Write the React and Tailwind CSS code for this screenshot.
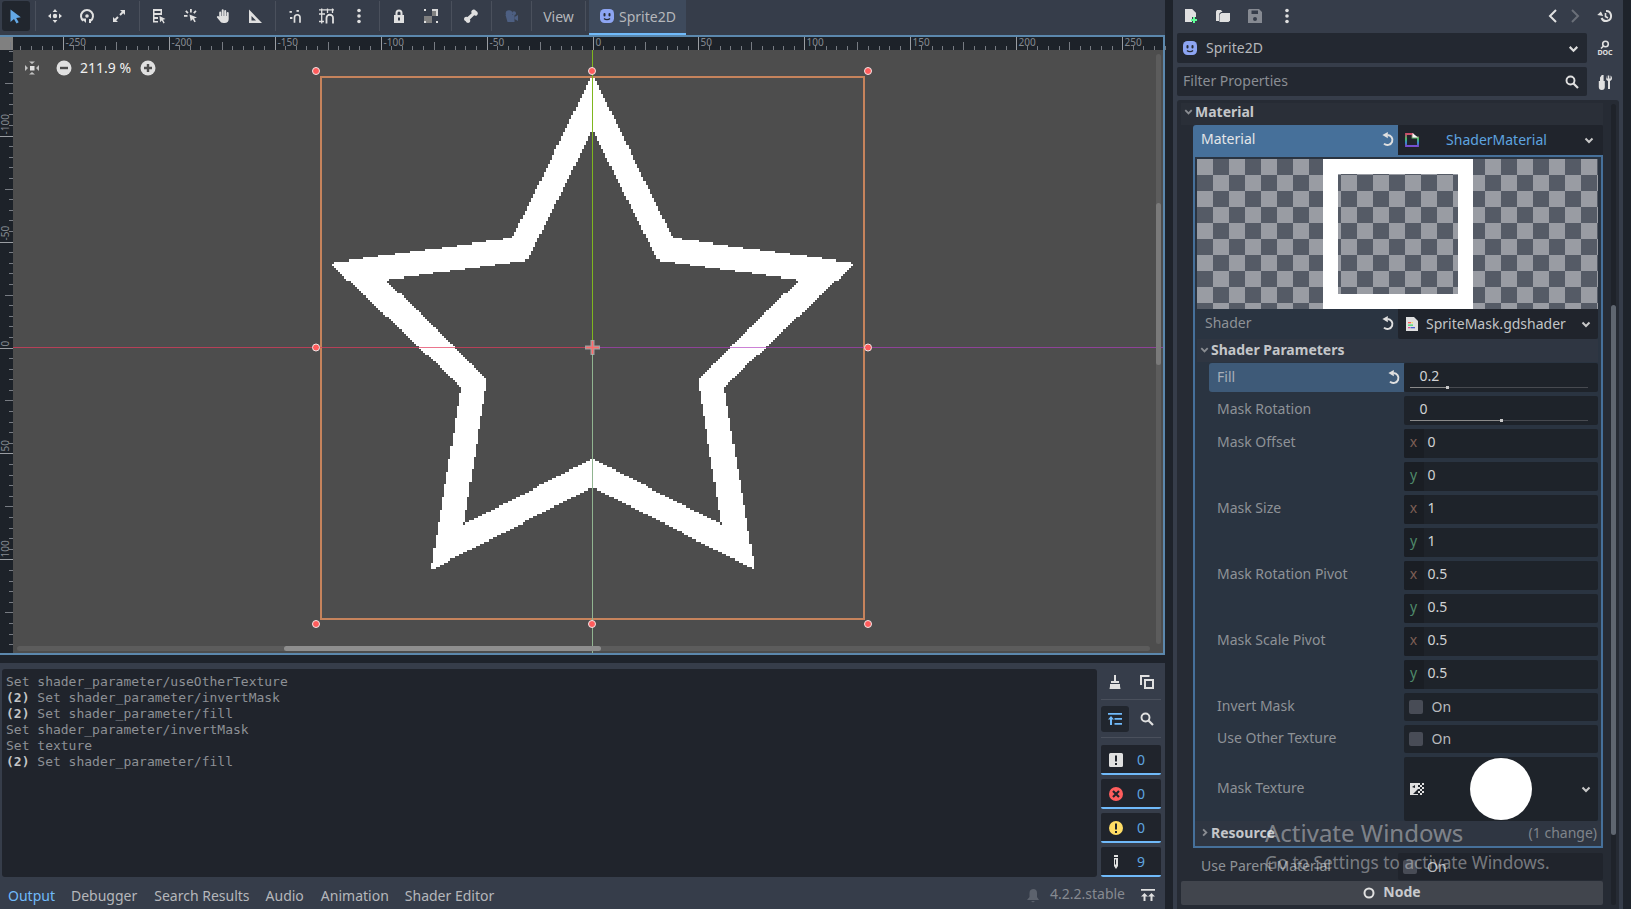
import React from "react";

const Ic = ({ s = 16, c = "#e0e0e0", children, className = "" }) => (
  <svg width={s} height={s} viewBox="0 0 16 16" fill={c} className={"shrink-0 " + className}>{children}</svg>
);
const Dots = () => <Ic><circle cx="8" cy="2.5" r="1.8" /><circle cx="8" cy="8" r="1.8" /><circle cx="8" cy="13.5" r="1.8" /></Ic>;
const Reset = ({ c = "#e0e0e0" }) => (
  <Ic c={c}><path d="M8.5 3A5 5 0 1 1 5 11.6" fill="none" stroke={c} strokeWidth="2" /><path d="M8.8 0v6.2L3.4 3.100z" /></Ic>
);
const Chev = ({ s = 12, c = "#c8c8c8", w = 2 }) => (
  <svg width={s} height={s} viewBox="0 0 12 12" className="shrink-0"><path d="M2.5 4.5 6 8l3.5-3.5" fill="none" stroke={c} strokeWidth={w} /></svg>
);
const SpriteIcon = () => (
  <Ic c="#8da5f3"><rect x="1" y="1" width="14" height="14" rx="4.5" /><rect x="4.5" y="5" width="2" height="3.4" rx="1" fill="#262b34" /><rect x="9.5" y="5" width="2" height="3.4" rx="1" fill="#262b34" /><path d="M5 10.5c1.5 1.6 4.5 1.6 6 0" fill="none" stroke="#262b34" strokeWidth="1.3" /></Ic>
);
const Search = () => <Ic><circle cx="6.5" cy="6.5" r="4" fill="none" stroke="#e0e0e0" strokeWidth="1.9" /><path d="M9.5 9.5 14 14" stroke="#e0e0e0" strokeWidth="2.2" /></Ic>;

const tools = [
  [<><circle cx="8" cy="8" r="2.2" /><path d="M8 1l2.4 3H5.6zM8 15l2.4-3H5.6zM1 8l3-2.4v4.8zM15 8l-3-2.4v4.8z" /></>],
  [<><path d="M4.4 12.8A6 6 0 1 1 11.6 12.8" fill="none" stroke="#e0e0e0" strokeWidth="2" /><path d="M2.5 10.5h4.5v4.5z" /><rect x="10" y="11" width="2" height="4" /><circle cx="8" cy="8" r="1.8" /></>],
  [<path d="M9 2h5v5l-1.8-1.8-2.5 2.5-1.4-1.4 2.5-2.5zM7 14H2V9l1.8 1.8 2.5-2.5 1.4 1.4-2.5 2.5z" />],
];
const tools2 = [
  [<><path d="M2 1h9v6H9.5V3h-6v2h6v2h-6v2H7v2H3.5v2H7v1.5H2z" /><path d="M8.5 8l6 3-2.5.8 1.7 3-1.2.7-1.7-3-1.8 1.7z" /></>],
  [<><rect x="7" y="1" width="1.8" height="3.5" /><rect x="1" y="7" width="3.5" height="1.8" /><rect x="3" y="2.5" width="1.8" height="3" transform="rotate(-45 3.9 4)" /><rect x="11" y="2.5" width="1.8" height="3" transform="rotate(45 11.9 4)" /><path d="M6.5 6.5l7.5 3-3 1 1.8 3-1.4.8-1.7-3-2 2z" /></>],
  [<path d="M4.2 9V4.5a1 1 0 0 1 2 0V8h.5V2.3a1 1 0 0 1 2 0V8h.5V3a1 1 0 0 1 2 0v5h.5V5a1 1 0 0 1 2 0v6c0 2.500-1.500 4-4 4H8.500c-2 0-3-.8-4-2.500L2 9.500c-.6-1.200.9-2.200 1.800-1.100z" />],
  [<path fillRule="evenodd" d="M2 1.500 15 15H2zM4.500 8v4.500H9z" />],
];
const tools3 = [
  [<><path d="M7.500 14.700V9.500a2.700 2.700 0 0 1 5.500 0V14.700" fill="none" stroke="#e0e0e0" strokeWidth="1.700" /><rect x="2.500" y="3" width="2.400" height="1.800" /><rect x="3" y="9" width="2.400" height="2" /><rect x="9.500" y="2" width="2.400" height="1.800" /></>],
  [<><path d="M2.700 0.500V15.500M8.500 0.500V5M13.500 0.500V5M0 1.800h15M0 6h6M0 13.500h5" fill="none" stroke="#e0e0e0" strokeWidth="1.300" /><path d="M7.500 15.500V10a3 3 0 0 1 6.500 0V15.500" fill="none" stroke="#e0e0e0" strokeWidth="1.800" /></>],
  [<><circle cx="8" cy="2.500" r="1.800" /><circle cx="8" cy="8" r="1.800" /><circle cx="8" cy="13.500" r="1.800" /></>],
];
const Lock = () => <Ic><path fillRule="evenodd" d="M4.500 7V5a3.500 3.500 0 0 1 7 0v2h1.500v8H3V7zM6.500 7h3V5a1.500 1.500 0 0 0-3 0zM7 9.500v3h2v-3z" /></Ic>;
const Group = () => <Ic c="#e0e0e0"><rect x="1" y="8" width="8" height="7" fill="#808080" /><rect x="9" y="1" width="6" height="7" fill="#d8d8d8" /><rect x="9" y="3" width="4" height="5" fill="#808080" /><rect x="1" y="1" width="2" height="2" /><rect x="13" y="13" width="2" height="2" /><rect x="1" y="13" width="2" height="2" /></Ic>;
const Bone = () => <Ic><path d="M11 1.500a2.200 2.200 0 0 1 2 1.600 2.300 2.300 0 0 1 1.200 3.800 2.300 2.300 0 0 1-3 .4L6.900 11.500a2.400 2.400 0 0 1-.5 3 2.300 2.300 0 0 1-3.600-1.300 2.300 2.300 0 0 1-1.300-3.600 2.400 2.400 0 0 1 3-.5L8.700 5.200a2.400 2.400 0 0 1 .4-3 2.300 2.300 0 0 1 1.900-.7z" /></Ic>;
const Cam = () => <Ic c="#4d5f82"><circle cx="6" cy="5.500" r="3.300" /><circle cx="11" cy="5.300" r="2" /><path d="M2.500 7h9v7h-7z" /><path d="M11.500 9l3.500-2v6l-3.500-2z" /></Ic>;

const Sep = () => <div className="w-px h-[30px] mt-px ml-[4px] mr-[3px] bg-[#4a505c]" />;
const Btn = ({ children, w = "w-[32px]" }) => <div className={"h-[32px] flex items-center justify-center " + w}>{children}</div>;

const ticks = [];
for (let n = -275; n <= 270; n += 5) ticks.push(n);
const ux = (n) => Math.round(592.5 + n * 2.119) + 0.5;
const uy = (n) => Math.round(347.5 + n * 2.119) + 0.5;
const tl = (n) => (n % 50 === 0 ? 13 : n % 25 === 0 ? 8 : 4);

const TopRuler = () => (
  <svg width="1150" height="13" viewBox="13 37 1150 13" className="block overflow-visible">
    {ticks.map((n) => <line key={n} x1={ux(n)} x2={ux(n)} y1={50 - tl(n)} y2={50} stroke={n % 50 === 0 ? "#9a9da2" : "#777b82"} />)}
    {ticks.filter((n) => n % 50 === 0).map((n) => (
      <text key={n} x={ux(n) + 2} y="46" fontSize="10" fill="#858a91" fontFamily="'Noto Sans',sans-serif">{n}</text>
    ))}
  </svg>
);
const LeftRuler = () => (
  <svg width="13" height="603" viewBox="0 50 13 603" className="block overflow-visible">
    {ticks.filter((n) => uy(n) > 50 && uy(n) < 653).map((n) => <line key={n} y1={uy(n)} y2={uy(n)} x1={13 - tl(n)} x2={13} stroke={n % 50 === 0 ? "#9a9da2" : "#777b82"} />)}
    {[-100, -50, 0, 50, 100].map((n) => (
      <text key={n} transform={`translate(8.500,${uy(n) - 2}) rotate(-90)`} fontSize="10" fill="#858a91" fontFamily="'Noto Sans',sans-serif">{n}</text>
    ))}
  </svg>
);

// The star texture: 256 texels drawn at 2.12 screen pixels each, sampled without smoothing.
const OUTER = [[592.5, 75], [673, 238], [855, 263], [724, 387], [755, 570], [592.5, 487], [431, 570], [461, 387], [330, 263], [512, 238]];
const INNER = [[592.5, 131], [528, 260], [386, 280], [487, 380], [464, 524], [592.5, 459], [721, 524], [698, 380], [799, 280], [657, 260]];
const inside = (poly, x, y) => {
  let r = false;
  for (let i = 0, j = poly.length - 1; i < poly.length; j = i++) {
    const [xi, yi] = poly[i];
    const [xj, yj] = poly[j];
    if (yi > y !== yj > y && x < ((xj - xi) * (y - yi)) / (yj - yi) + xi) r = !r;
  }
  return r;
};
const buildStar = () => {
  const T = 543 / 256;
  let d = "";
  for (let j = 0; j < 256; j++) {
    const cy = 77 + (j + 0.5) * T;
    const y0 = Math.round(77 + j * T);
    const y1 = Math.round(77 + (j + 1) * T);
    let start = -1;
    for (let i = 0; i <= 256; i++) {
      const cx = 321 + (i + 0.5) * T;
      const on = i < 256 && inside(OUTER, cx, cy) && !inside(INNER, cx, cy);
      if (on && start < 0) start = i;
      if (!on && start >= 0) {
        const x0 = Math.round(321 + start * T);
        const x1 = Math.round(321 + i * T);
        d += `M${x0} ${y0}H${x1}V${y1}H${x0}Z`;
        start = -1;
      }
    }
  }
  return d;
};
const STAR = buildStar();

const Canvas = () => {
  const handles = [[316, 71], [592, 71], [868, 71], [316, 347.500], [868, 347.500], [316, 624], [592, 624], [868, 624]];
  return (
    <svg width="1150" height="603" viewBox="13 50 1150 603" className="absolute inset-0 block">
      <path shapeRendering="crispEdges" fill="#fff" d={STAR} />
      <rect x="321" y="77" width="543" height="542" fill="none" stroke="#c6835c" strokeWidth="2" />
      <line x1="13" x2="592" y1="347.500" y2="347.500" stroke="#e23a5c" strokeOpacity="0.7" />
      <line x1="592" x2="1163" y1="347.500" y2="347.500" stroke="#b03ec0" strokeOpacity="0.65" />
      <line x1="592.500" x2="592.500" y1="50" y2="347" stroke="#7fb61e" />
      <line x1="592.500" x2="592.500" y1="347" y2="653" stroke="#90b490" />
      <path d="M592.500 340v15M585 347.500h15" stroke="#b5b5b5" strokeWidth="4" opacity="0.8" />
      <path d="M592.500 341v13M586 347.500h13" stroke="#ff6a6a" strokeWidth="1.500" />
      {handles.map(([x, y]) => <circle key={x + "-" + y} cx={x} cy={y} r="3.500" fill="#ff5c5c" stroke="#f2e6e6" strokeWidth="1" />)}
    </svg>
  );
};

const Viewport = () => (
  <div className="h-[620px] border-y-2 border-r-2 border-[#5c88ad] flex flex-col">
    <div className="h-[13px] flex bg-[#1d2229]">
      <div className="w-[13px] h-full bg-[#808080]" />
      <TopRuler />
    </div>
    <div className="flex-1 flex bg-[#1d2229]">
      <div className="w-[13px]"><LeftRuler /></div>
      <div className="relative flex-1 bg-[#4d4d4d] overflow-hidden">
        <Canvas />
        <div className="absolute left-[11px] top-[10px] flex items-center h-[16px] text-white">
          <Ic s={16}><rect x="6" y="6" width="4.500" height="4.500" /><path d="M1 5l3 3-3 3M15 5l-3 3 3 3M5 1.500h6L8 4zM5 14.500h6L8 12z" opacity="0.8" /></Ic>
          <Ic s={16} className="ml-[16px]"><circle cx="8" cy="8" r="7.500" /><rect x="4" y="6.800" width="8" height="2.400" fill="#4d4d4d" /></Ic>
          <span className="ml-[8px] w-[51px] text-[14px] leading-[16px] whitespace-nowrap text-[#f0f0f0]">211.9 %</span>
          <Ic s={16} className="ml-[9px]"><circle cx="8" cy="8" r="7.500" /><path d="M4 6.800h2.800V4h2.400v2.800H12v2.400H9.200V12H6.800V9.200H4z" fill="#4d4d4d" /></Ic>
        </div>
        <div className="absolute left-[4px] top-[596px] w-[1133px] h-[5px] rounded-full bg-[#5c5c5c]" />
        <div className="absolute left-[271px] top-[596px] w-[317px] h-[5px] rounded-full bg-[#8e8e8e]" />
        <div className="absolute left-[1143px] top-[4px] w-[5px] h-[590px] rounded-full bg-[#5c5c5c]" />
        <div className="absolute left-[1143px] top-[153px] w-[5px] h-[162px] rounded-full bg-[#7a7a7a]" />
      </div>
    </div>
  </div>
);

const LOG = [
  [null, "Set shader_parameter/useOtherTexture"],
  ["(2)", "Set shader_parameter/invertMask"],
  ["(2)", "Set shader_parameter/fill"],
  [null, "Set shader_parameter/invertMask"],
  [null, "Set texture"],
  ["(2)", "Set shader_parameter/fill"],
];

const Filter = ({ icon, n }) => (
  <div className="h-[30px] w-[60px] flex items-center bg-[#20242c] border-b-2 border-[#70bafa] rounded-[2px] pl-[7px] pt-[2px]">
    {icon}
    <span className="ml-[13px] text-[14px] text-[#5ea4e0] leading-none">{n}</span>
  </div>
);

const Output = () => (
  <div className="h-[246px] bg-[#363d4a] flex flex-col">
    <div className="h-[214px] flex pt-[6px]">
      <div className="ml-[2px] w-[1095px] bg-[#20242c] rounded-[3px] pl-[4px] pt-[5px] font-['DejaVu_Sans_Mono',monospace] text-[13px] leading-[16px] text-[#8d9095]">
        {LOG.map(([b, t], i) => (
          <div key={i} className="whitespace-pre h-[16px]">
            {b && <span className="font-bold text-[#c4c6c8]">{b + " "}</span>}
            {t}
          </div>
        ))}
      </div>
      <div className="ml-[4px] w-[60px] flex flex-col">
        <div className="h-[26px] flex items-center">
          <div className="w-[28px] flex justify-center"><Ic><path d="M7 1h2v6h3v2H4V7h3zM3 10h10v2.200l.5 2.800h-11l.5-2.800z" /></Ic></div>
          <div className="ml-[4px] w-[28px] flex justify-center"><Ic><path fillRule="evenodd" d="M1 1h9.500v2H3v8H1zM5 5h10v10H5zM7 7v6h6V7z" /></Ic></div>
        </div>
        <div className="h-px bg-[#4a505c] mt-[5px]" />
        <div className="h-[26px] mt-[6px] flex items-center">
          <div className="w-[28px] h-[26px] rounded-[3px] bg-[#21262e] flex justify-center items-center">
            <Ic c="#70bafa"><path d="M1 2h14v1.800H1zM7.500 7H15v1.800H7.500zM7.500 12H15v1.800H7.500zM4 5l3 3.500H5V14H3V8.500H1z" /></Ic>
          </div>
          <div className="ml-[4px] w-[28px] flex justify-center"><Search /></div>
        </div>
        <div className="h-px bg-[#4a505c] mt-[5px]" />
        <div className="mt-[7px] flex flex-col gap-[4px]">
          <Filter n="0" icon={<Ic><path fillRule="evenodd" d="M2.500 1h11A1.500 1.500 0 0 1 15 2.500v11a1.500 1.500 0 0 1-1.500 1.500h-11A1.500 1.500 0 0 1 1 13.500v-11A1.500 1.500 0 0 1 2.500 1zM7 3.500V9.500h2V3.500zM7 11v2h2v-2z" /></Ic>} />
          <Filter n="0" icon={<Ic c="#ff5d5d"><circle cx="8" cy="8" r="7" /><path d="M5 5l6 6M11 5l-6 6" stroke="#20242c" strokeWidth="2.200" /></Ic>} />
          <Filter n="0" icon={<Ic c="#ffdd65"><circle cx="8" cy="8" r="7" /><path d="M7 3.500h2v6H7zM7 11h2v2H7z" fill="#20242c" /></Ic>} />
          <Filter n="9" icon={<Ic><path fillRule="evenodd" d="M6 1h4v2H6zM6 4h4v8l-2 3-2-3zM7 5.500v5h1v-5z" /></Ic>} />
        </div>
      </div>
    </div>
    <div className="flex-1 flex items-center text-[14px] text-[#b5b7bb] pt-[4px]">
      <span className="ml-[8px] text-[#70bafa]">Output</span>
      <span className="ml-[16px]">Debugger</span>
      <span className="ml-[17px]">Search Results</span>
      <span className="ml-[16px]">Audio</span>
      <span className="ml-[17px]">Animation</span>
      <span className="ml-[16px]">Shader Editor</span>
      <div className="ml-auto flex items-center">
        <Ic c="#5c626d"><path d="M8 2a4 4 0 0 1 4 4v4l2 3H2l2.500-3V6a4 4 0 0 1 3.500-4zM6 14h4l-2 1.500z" /></Ic>
        <span className="ml-[9px] pb-[3px] text-[#868a91]">4.2.2.stable</span>
        <div className="ml-[15px] mr-[9px]"><Ic><path d="M1 2h14v1.800H1zM4.500 6 8 9.500H5.500V14h-2V9.500H1zM11.500 6 15 9.500h-2.500V14h-2V9.500H8z" /></Ic></div>
      </div>
    </div>
  </div>
);

const checker = "bg-[conic-gradient(#555b66_25%,#999ca3_0_50%,#555b66_0_75%,#999ca3_0)] bg-[length:32px_32px]";

const Slider = ({ v, fill }) => (
  <div className="flex-1 relative">
    <div className="pl-[16px] text-[14px] leading-[26px] text-[#d0d2d4]">{v}</div>
    <div className="absolute left-[6px] right-[10px] bottom-[4px] h-px bg-[#474a50]">
      <div className="absolute left-0 top-0 h-px bg-[#8a8a8a]" style={{ width: fill }} />
      <div className="absolute top-[-1px] w-[3px] h-[3px] bg-[#c8c8c8]" style={{ left: fill - 1 }} />
    </div>
  </div>
);
const Axis = ({ a, v }) => (
  <div className="h-[29px] flex bg-[#1e232a] rounded-[2px] items-center">
    <div className={"w-[20px] h-full rounded-l-[2px] bg-[#1a1e24] text-center leading-[25px] text-[14px] " + (a === "x" ? "text-[#7d5f55]" : "text-[#4f8a6a]")}>{a}</div>
    <span className="ml-[4px] pb-[4px] text-[14px] text-[#d0d2d4]">{v}</span>
  </div>
);
const Label = ({ children, h = "h-[29px]" }) => (
  <div className={"w-[195px] pl-[8px] pb-[4px] flex items-center text-[14px] text-[#8e9297] " + h}>{children}</div>
);
const VecRow = ({ label, x, y }) => (
  <div className="flex">
    <Label>{label}</Label>
    <div className="w-[195px] flex flex-col gap-[4px]"><Axis a="x" v={x} /><Axis a="y" v={y} /></div>
  </div>
);
const Check = ({ label }) => (
  <div className="flex">
    <Label h="h-[28px]">{label}</Label>
    <div className="w-[195px] h-[28px] bg-[#1e232a] rounded-[2px] flex items-center pl-[5px]">
      <div className="w-[14px] h-[14px] rounded-[2px] bg-[#484c56]" />
      <span className="ml-[9px] pb-[2px] text-[14px] text-[#b8babd]">On</span>
    </div>
  </div>
);

const Inspector = () => (
  <div className="relative ml-[4px] w-[442px] h-[809px] bg-[#262b34] rounded-t-[3px] mt-[4px] pl-[4px] pt-[3px]">
    <div className="h-[22px] w-[422px] bg-[#2a2f38] flex items-center pb-[5px]">
      <div className="ml-[2px]"><Chev s={11} c="#8a8d92" /></div>
      <span className="ml-[1px] font-bold text-[14px] text-[#c4c6c9]">Material</span>
    </div>
    <div className="ml-[12px] w-[410px]">
      <div className="flex h-[30px]">
        <div className="w-[205px] bg-[#46709a] rounded-tl-[3px] flex items-center pl-[8px] pr-[3px] text-[14px] text-[#e4e6e8]">
          <span className="flex-1 pb-[3px]">Material</span><Reset />
        </div>
        <div className="w-[205px] bg-[#20242c] rounded-t-[2px] flex items-center pl-[6px] pr-[8px]">
          <Ic c="none"><path d="M2 2h6.500v3.500H14V14H2z" fill="none" stroke="url(#rb)" strokeWidth="1.800" /><path d="M8.500 1 14 5.500H8.500z" fill="#f5f5f5" /><defs><linearGradient id="rb" x1="0" y1="0" x2="0" y2="1"><stop offset="0" stopColor="#d04a6a" /><stop offset="0.400" stopColor="#4fcf6f" /><stop offset="0.750" stopColor="#3a90e0" /><stop offset="1" stopColor="#7a4ad0" /></linearGradient></defs></Ic>
          <span className="flex-1 text-center text-[14px] text-[#5ea4e0] pr-[10px] pb-[2px]">ShaderMaterial</span>
          <Chev />
        </div>
      </div>
      <div className="h-[693px] border-2 border-[#46709a] bg-[#2a3441] pl-[2px] pr-[3px] pt-[2px]">
        <div className={"relative h-[150px] w-[401px] flex justify-center " + checker}>
          <div className="w-[150px] h-[150px] mr-[-1px] p-[15px] bg-white">
            <div className={"w-[120px] h-[120px] bg-[position:3px_1px] " + checker} />
          </div>
        </div>
        <div className="h-[30px] flex">
          <div className="w-[201px] pl-[8px] pr-[3px] flex items-center text-[14px] text-[#8e9297]">
            <span className="flex-1 pb-[4px]">Shader</span><Reset />
          </div>
          <div className="w-[200px] bg-[#20242c] rounded-b-[2px] flex items-center pl-[6px] pr-[6px]">
            <Ic><path d="M2 1h8l4 4v10H2z" /><path d="M4 6h3v1.300H4z" fill="#ff5d5d" /><path d="M7.500 6H9v1.300H7.500z" fill="#ffdd65" /><path d="M4 8.500h5v1.300H4z" fill="#45d96f" /><path d="M4 11h2v1.300H4z" fill="#e0508e" /><path d="M6.500 11H11v1.300H6.500z" fill="#4a5cd0" /></Ic>
            <span className="flex-1 ml-[6px] pb-[2px] text-[14px] text-[#c2c4c7] whitespace-nowrap">SpriteMask.gdshader</span>
            <Chev />
          </div>
        </div>
        <div className="h-[23px] bg-[#2f3642] flex items-center pb-[2px]">
          <div className="ml-[2px]"><Chev s={11} c="#8a8d92" /></div>
          <span className="ml-px font-bold text-[14px] text-[#c4c6c9] whitespace-nowrap">Shader Parameters</span>
        </div>
        <div className="ml-[12px] pt-px flex flex-col gap-[4px]">
          <div className="flex h-[29px]">
            <div className="w-[195px] bg-[#3e5a78] rounded-l-[3px] flex items-center pl-[8px] pr-[3px] text-[14px] text-[#a7afb8]">
              <span className="flex-1 pb-[3px]">Fill</span><Reset />
            </div>
            <div className="w-[195px] bg-[#1e232a] rounded-[2px] flex"><Slider v="0.2" fill={37} /></div>
          </div>
          <div className="flex h-[29px]">
            <Label>Mask Rotation</Label>
            <div className="w-[195px] bg-[#1e232a] rounded-[2px] flex"><Slider v="0" fill={91} /></div>
          </div>
          <VecRow label="Mask Offset" x="0" y="0" />
          <VecRow label="Mask Size" x="1" y="1" />
          <VecRow label="Mask Rotation Pivot" x="0.5" y="0.5" />
          <VecRow label="Mask Scale Pivot" x="0.5" y="0.5" />
          <Check label="Invert Mask" />
          <Check label="Use Other Texture" />
          <div className="flex h-[64px]">
            <Label h="h-[64px]">Mask Texture</Label>
            <div className="w-[195px] bg-[#1e232a] rounded-[2px] flex items-center pl-[5px] pr-[6px]">
              <Ic><path d="M1 2h8v6L4 13h5v1H1z" /><path d="M9 2h2v2H9zM13 2h2v2h-2zM11 4h2v2h-2zM9 6h2v2H9zM13 6h2v2h-2zM11 8h2v2h-2zM9 10h2v2H9zM13 10h2v2h-2zM11 12h2v2h-2z" /><path d="M3 6l3-2v3z" fill="#1e232a" /></Ic>
              <div className="flex-1 flex justify-center pr-[2px]"><div className="w-[62px] h-[62px] rounded-full bg-white" /></div>
              <Chev />
            </div>
          </div>
        </div>
        <div className="h-[25px] -ml-[2px] -mr-[3px] bg-[#2f3642] flex items-center pl-[2px] pr-[4px] pb-[3px]">
          <div className="ml-[2px] -rotate-90"><Chev s={11} c="#8a8d92" /></div>
          <span className="ml-px font-bold text-[14px] text-[#c4c6c9]">Resource</span>
          <span className="ml-auto text-[14px] text-[#7f848b]">(1 change)</span>
        </div>
      </div>
      <div className="flex h-[27px] mt-[5px]">
        <div className="w-[205px] pl-[8px] pb-[2px] flex items-center text-[14px] text-[#8e9297] whitespace-nowrap">Use Parent Material</div>
        <div className="w-[205px] bg-[#20242c] rounded-[2px] flex items-center pl-[5px]">
          <div className="w-[14px] h-[14px] rounded-[2px] bg-[#484c56]" />
          <span className="ml-[10px] text-[14px] text-[#b8babd]">On</span>
        </div>
      </div>
    </div>
    <div className="h-[24px] w-[422px] mt-px bg-[#41454d] rounded-[2px] flex items-center justify-center">
      <svg width="12" height="12" viewBox="0 0 12 12"><circle cx="6" cy="6" r="4.500" fill="none" stroke="#e0e0e0" strokeWidth="2" /></svg>
      <span className="ml-[8px] pb-[3px] font-bold text-[14px] text-[#c8cacd]">Node</span>
    </div>
    <div className="absolute left-[434px] top-[4px] w-[5px] h-[801px] rounded-full bg-[#1f232a]" />
    <div className="absolute left-[434px] top-[205px] w-[5px] h-[530px] rounded-full bg-[#5f6670]" />
  </div>
);

const Dock = () => (
  <div className="ml-[8px] w-[450px] h-[909px] bg-[#363d4a] flex flex-col">
    <div className="h-[33px] flex items-center pl-[10px] pb-px">
      <Ic><path d="M2 1h7l4 4v4H9v5H2z" /><path d="M9 1l4 4H9z" opacity="0.6" /><path d="M10 9h2v2h2v2h-2v2h-2v-2H8v-2h2z" fill="#5fff97" /></Ic>
      <div className="ml-[16px]"><Ic><path d="M1 3.500 2 2h4l1.500 2H6L4 6v7H3L1 13z" /><path d="M4.500 6.500 6.500 5H15v7.500L13.500 14H4.500z" /></Ic></div>
      <div className="ml-[16px]"><Ic c="#868a92"><path fillRule="evenodd" d="M2 1h10l3 3v11H1V2zM4.500 2.500V6h6.500V2.500zM8 9a2 2 0 1 0 0 4 2 2 0 0 0 0-4z" /></Ic></div>
      <div className="ml-[16px]"><Dots /></div>
      <div className="ml-auto flex items-center pr-[10px]">
        <svg width="12" height="16" viewBox="0 0 12 16"><path d="M9 2 3 8l6 6" fill="none" stroke="#e0e0e0" strokeWidth="2" /></svg>
        <svg width="12" height="16" viewBox="0 0 12 16" className="ml-[10px]"><path d="M3 2l6 6-6 6" fill="none" stroke="#6a6f78" strokeWidth="2" /></svg>
        <div className="ml-[16px]"><Ic><path d="M9 3a5 5 0 1 1-4.500 7" fill="none" stroke="#e0e0e0" strokeWidth="2" /><path d="M0.500 7.500h6L3.500 3.500z" transform="rotate(10 3 6)" /><path d="M8.500 5v3.500l2.500 1.500" fill="none" stroke="#e0e0e0" strokeWidth="1.600" /></Ic></div>
      </div>
    </div>
    <div className="h-[30px] ml-[4px] flex">
      <div className="w-[410px] bg-[#232831] rounded-[2px] flex items-center pl-[5px] pr-[7px]">
        <SpriteIcon />
        <span className="ml-[8px] flex-1 pb-[2px] text-[14px] text-[#b5b7bb]">Sprite2D</span>
        <Chev s={13} c="#dcdcdc" />
      </div>
      <div className="flex-1 flex justify-center items-center">
        <Ic><circle cx="8.500" cy="4" r="2.800" fill="none" stroke="#e0e0e0" strokeWidth="1.600" /><path d="M6.500 6 4 8.500" fill="none" stroke="#e0e0e0" strokeWidth="1.600" /><text x="8" y="15" textAnchor="middle" fontSize="7" fontWeight="700" fontFamily="'Noto Sans',sans-serif">DOC</text></Ic>
      </div>
    </div>
    <div className="h-[29px] ml-[4px] mt-[4px] flex">
      <div className="w-[410px] bg-[#232831] rounded-[2px] flex items-center pl-[6px] pr-[7px]">
        <span className="flex-1 pb-[2px] text-[14px] text-[#8a8e94]">Filter Properties</span>
        <Search />
      </div>
      <div className="flex-1 flex justify-center items-center">
        <Ic><path d="M4 1h1.800v6H7v6a2.500 2.500 0 0 1-6 0V7h1.200V3.500z" transform="translate(.8 0)" /><path d="M9.500 1.500v3h1.200v-3h1.600v3h1.200v-3c1 .6 1.500 1.600 1.500 2.800 0 1.300-.8 2.200-2 2.700V15h-2V7C9.800 6.500 9 5.600 9 4.300c0-1.200.4-2.200.5-2.800z" /></Ic>
      </div>
    </div>
    <Inspector />
  </div>
);

export default function App() {
  return (
    <div className="relative w-[1631px] h-[909px] overflow-hidden flex bg-[#1e232b] font-['Noto_Sans',sans-serif] text-[14px]">
      <div className="w-[1165px] flex flex-col">
        <div className="h-[35px] bg-[#363d4a] flex items-start">
          <div className="w-[31px] h-[32px] pl-[2px] flex items-center">
            <div className="w-[28px] h-[30px] rounded-[3px] bg-[#21262e] flex items-center justify-center">
              <Ic c="#63a8e6"><path d="M2.500 1.500v12.500l3.500-3 2.500 4.500 2.200-1.200-2.500-4.400 4.600-.6z" /></Ic>
            </div>
          </div>
          <Sep />
          {tools.map((t, i) => <Btn key={i}><Ic>{t[0]}</Ic></Btn>)}
          <Sep />
          {tools2.map((t, i) => <Btn key={i}><Ic>{t[0]}</Ic></Btn>)}
          <Sep />
          {tools3.map((t, i) => <Btn key={i}><Ic>{t[0]}</Ic></Btn>)}
          <Sep />
          <Btn><Lock /></Btn>
          <Btn><Group /></Btn>
          <Sep />
          <Btn><Bone /></Btn>
          <Sep />
          <Btn><Cam /></Btn>
          <Sep />
          <Btn w="w-[46px]"><span className="pl-px text-[14px] text-[#b5b7bb]">View</span></Btn>
          <Sep />
          <div className="w-[97px] h-[35px] bg-[#3e4a5c] border-b-2 border-[#70bafa] flex items-center pl-[10px] pb-px">
            <SpriteIcon />
            <span className="ml-[4px] text-[14px] text-[#b5b7bb]">Sprite2D</span>
          </div>
        </div>
        <Viewport />
        <div className="h-[8px]" />
        <Output />
      </div>
      <Dock />
      <div className="absolute left-[1265px] top-[817px] text-[24px] leading-[32px] text-[#ffffff66] whitespace-nowrap">Activate Windows</div>
      <div className="absolute left-[1265px] top-[851px] text-[17.200px] leading-[24px] text-[#ffffff66] whitespace-nowrap">Go to Settings to activate Windows.</div>
    </div>
  );
}
